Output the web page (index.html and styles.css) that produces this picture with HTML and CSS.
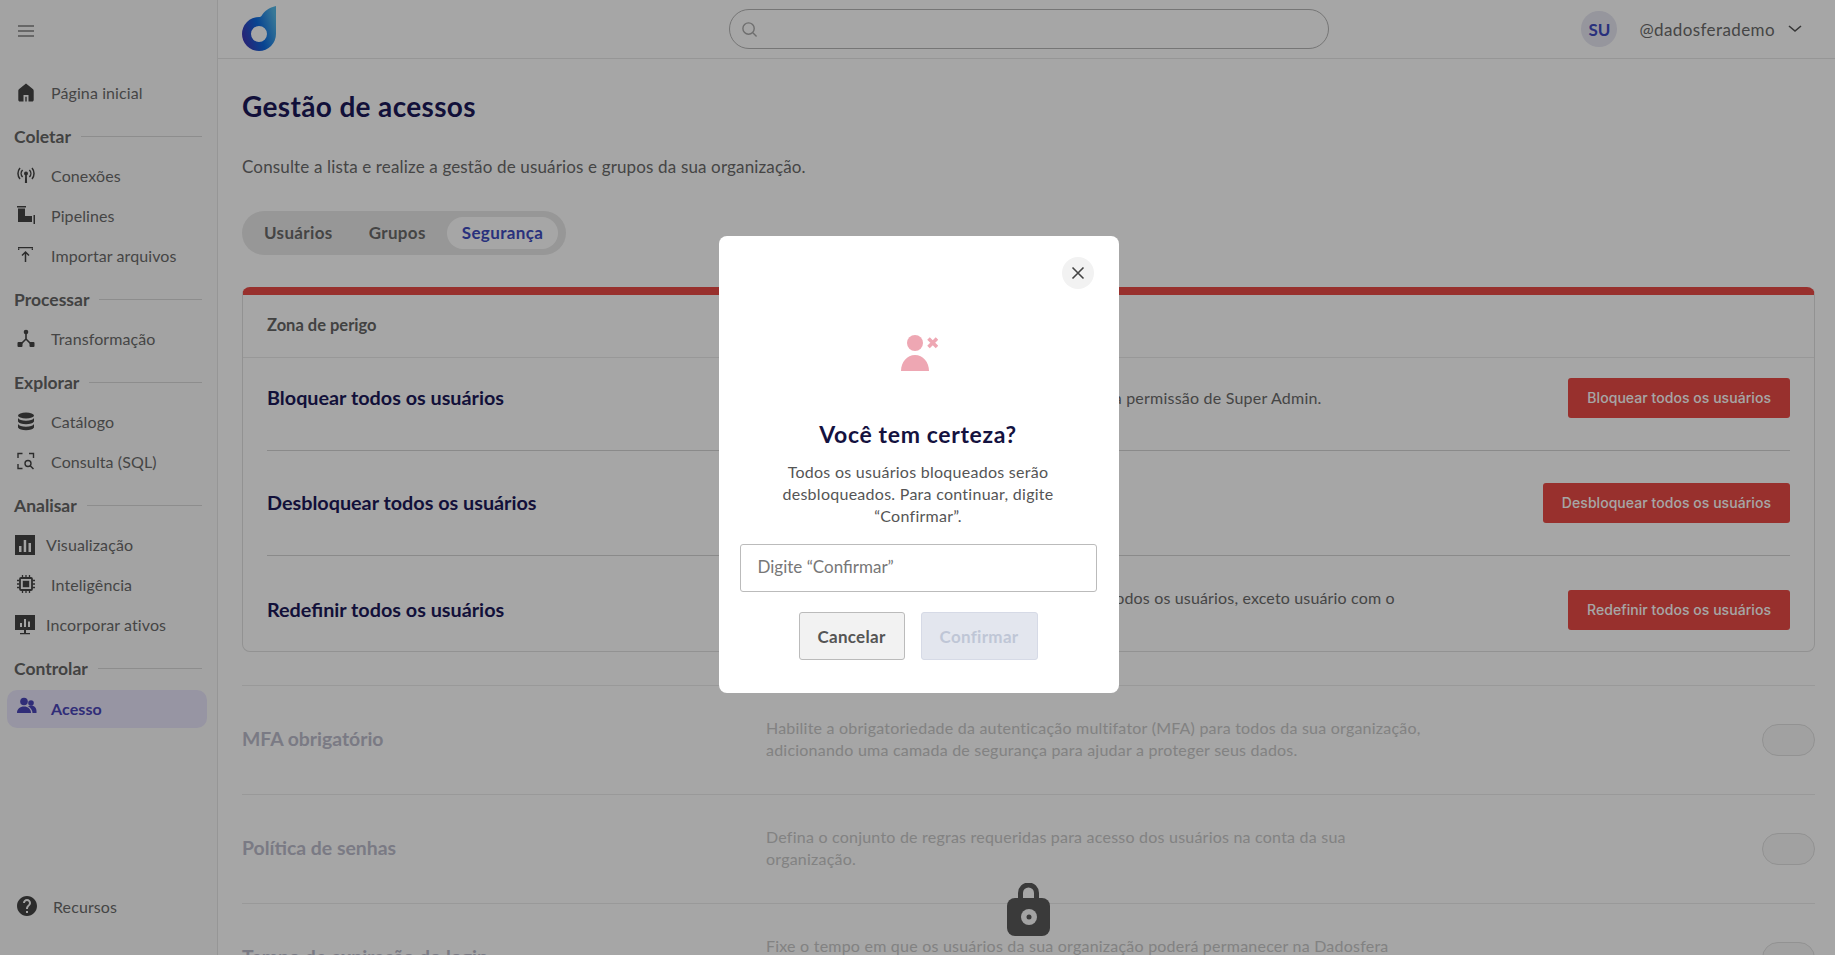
FILE: index.html
```html
<!DOCTYPE html>
<html lang="pt-BR">

<head>
  <meta charset="utf-8">
  <title>Gestão de acessos</title>
  <link rel="stylesheet" href="styles.css">
</head>

<body>
  <div class="app">
    <aside class="sidebar">
      <div class="burger">
        <svg width="16" height="12" viewBox="0 0 16 12"><path d="M0 1h16M0 6h16M0 11h16" stroke="#444" stroke-width="1.200" fill="none"/></svg>
      </div>
      <nav class="nav">
        <a class="item">
          <svg class="icon" viewBox="0 0 20 20"><path fill-rule="evenodd" d="M9 .5 2.500 5.800c-.9.7-1.200 1.300-1.200 2.300V17c0 .9.7 1.500 1.500 1.500h12.400c.8 0 1.500-.6 1.500-1.500V8.100c0-1-.3-1.600-1.200-2.300zM6.500 12h5v6.500h-1.800v-4.800H8.300v4.800H6.500z"/></svg>
          Página inicial
        </a>
        <div class="section"><span>Coletar</span></div>
        <a class="item">
          <svg class="icon" viewBox="0 0 20 20"><circle cx="9" cy="7.500" r="2"/><path d="M8.200 8h1.600l.3 9H7.900z"/><path d="M5.600 11a5 5 0 0 1 0-7M12.400 4a5 5 0 0 1 0 7M3 13a8.500 8.500 0 0 1 0-11M15 2a8.500 8.500 0 0 1 0 11" fill="none" stroke="#444" stroke-width="1.500"/></svg>
          Conexões
        </a>
        <a class="item">
          <svg class="icon" viewBox="0 0 20 20"><path d="M0 0h9v1.500H0zM1 2.500h7V10h7v6H1zM16.500 9H18v9h-1.500z"/></svg>
          Pipelines
        </a>
        <a class="item">
          <svg class="icon" viewBox="0 0 20 20"><path d="M1 1h15v1.300H1zM1 2v2h1.300V2zM14.700 2v2H16V2z"/><path d="M8.500 16V6M5 9.500 8.500 6 12 9.500" fill="none" stroke="#444" stroke-width="1.500"/></svg>
          Importar arquivos
        </a>
        <div class="section"><span>Processar</span></div>
        <a class="item">
          <svg class="icon" viewBox="0 0 20 20"><circle cx="9" cy="3" r="2.300"/><rect x="0.500" y="13" width="5" height="5" rx="1"/><rect x="12.500" y="13" width="5" height="5" rx="1"/><path d="M9 4v6l-5 5M9 10l5 5" fill="none" stroke="#444" stroke-width="1.600"/></svg>
          Transformação
        </a>
        <div class="section"><span>Explorar</span></div>
        <a class="item">
          <svg class="icon" viewBox="0 0 20 20"><ellipse cx="9" cy="3.500" rx="8" ry="3"/><path d="M1 6c1 1.800 4 2.700 8 2.700S16 7.800 17 6v3.500c-1 1.800-4 2.700-8 2.700S2 11.300 1 9.500zM1 12c1 1.800 4 2.700 8 2.700s7-.9 8-2.700v3.500c-1 1.800-4 2.700-8 2.700s-7-.9-8-2.700z"/></svg>
          Catálogo
        </a>
        <a class="item">
          <svg class="icon" viewBox="0 0 20 20"><path d="M1 6V1.500h4.500M12 1.500h4.500V6M1 12v4.500h4.500" fill="none" stroke="#444" stroke-width="1.400"/><circle cx="11" cy="11.500" r="3" fill="none" stroke="#444" stroke-width="1.400"/><path d="m13 13.500 3.500 3.500" stroke="#444" stroke-width="1.500"/></svg>
          Consulta (SQL)
        </a>
        <div class="section"><span>Analisar</span></div>
        <a class="item item-wide">
          <svg class="icon" viewBox="0 0 20 20"><path fill-rule="evenodd" d="M0 0h20v20H0zM4 11v6h2.500v-6zM8.700 5v12h2.500V5zM13.500 8v9H16V8z"/></svg>
          Visualização
        </a>
        <a class="item">
          <svg class="icon" viewBox="0 0 20 20"><rect x="3" y="3" width="12" height="12" rx="1" fill="none" stroke="#444" stroke-width="1.800"/><rect x="5.800" y="5.800" width="6.400" height="6.400"/><path d="M5.500 0v2.500M9 0v2.500M12.500 0v2.500M5.500 15.500V18M9 15.500V18M12.500 15.500V18M0 5.500h2.500M0 9h2.500M0 12.500h2.500M15.500 5.500H18M15.500 9H18M15.500 12.500H18" stroke="#444" stroke-width="1.300"/></svg>
          Inteligência
        </a>
        <a class="item item-wide">
          <svg class="icon" viewBox="0 0 20 20"><path fill-rule="evenodd" d="M0 0h20v15H0zM5 8v4h2V8zM9 4v8h2V4zM13 6.500V12h2V6.500z"/><path d="M9 15h2v3H9zM5 18h10v1.300H5z"/></svg>
          Incorporar ativos
        </a>
        <div class="section"><span>Controlar</span></div>
        <a class="item item-active">
          <svg class="icon" viewBox="0 0 20 20"><circle cx="7" cy="4.500" r="3.800"/><circle cx="14" cy="6" r="2.800"/><path d="M0 16c0-4 3-6.500 7-6.500s7 2.500 7 6.500zM11 9.200c1-.5 2-.7 3-.7 3 0 5.500 2.200 5.500 5.500V16h-4c0-2.700-1.800-5.300-4.500-6.800z"/></svg>
          Acesso
        </a>
      </nav>
      <a class="item item-help">
        <svg class="icon" viewBox="2 2 20 20"><path d="M12 2C6.480 2 2 6.480 2 12s4.480 10 10 10 10-4.480 10-10S17.520 2 12 2zm1 17h-2v-2h2v2zm2.070-7.750-.9.920C13.450 12.900 13 13.500 13 15h-2v-.5c0-1.100.45-2.100 1.170-2.830l1.240-1.260c.37-.36.59-.86.59-1.410 0-1.100-.9-2-2-2s-2 .9-2 2H8c0-2.210 1.790-4 4-4s4 1.790 4 4c0 .88-.36 1.680-.93 2.250z"/></svg>
        Recursos
      </a>
    </aside>

    <div class="content">
      <header class="topbar">
        <svg class="logo" width="34" height="46" viewBox="0 0 34 46">
          <defs>
            <linearGradient id="logoFill" x1="0" y1="0.7" x2="1" y2="0.3">
              <stop offset="0" stop-color="#3f36b4"/>
              <stop offset="0.5" stop-color="#0c6ae0"/>
              <stop offset="1" stop-color="#55b8e8"/>
            </linearGradient>
          </defs>
          <path fill="url(#logoFill)" fill-rule="evenodd" d="M34 0v28a17 17 0 1 1-17-17c1 0 1.800-.2 2.400-1C22.500 5 27 1.500 34 0zM17 20a8 8 0 1 0 0 16 8 8 0 0 0 0-16z"/>
        </svg>
        <div class="search">
          <svg width="17" height="17" viewBox="0 0 18 18"><circle cx="8" cy="8" r="6" fill="none" stroke="#aaa" stroke-width="1.500"/><path d="m12.500 12.500 4 4" stroke="#aaa" stroke-width="1.500"/></svg>
        </div>
        <div class="user">
          <span class="avatar">SU</span>
          <span class="handle">@dadosferademo</span>
          <svg width="14" height="8" viewBox="0 0 14 8"><path d="m1 1 6 5 6-5" fill="none" stroke="#555" stroke-width="1.600"/></svg>
        </div>
      </header>

      <main class="page">
        <h1>Gestão de acessos</h1>
        <p class="lead">Consulte a lista e realize a gestão de usuários e grupos da sua organização.</p>

        <div class="tabs">
          <span class="tab">Usuários</span>
          <span class="tab">Grupos</span>
          <span class="tab tab-active">Segurança</span>
        </div>

        <section class="danger">
          <div class="danger-head">Zona de perigo</div>
          <div class="danger-row row-first">
            <h3>Bloquear todos os usuários</h3>
            <p>Bloqueia todos os usuários, exceto aqueles com a permissão de Super Admin.</p>
            <button class="btn-red" type="button">Bloquear todos os usuários</button>
          </div>
          <div class="danger-row row-second">
            <h3>Desbloquear todos os usuários</h3>
            <p>Desbloqueia todos os usuários.</p>
            <button class="btn-red" type="button">Desbloquear todos os usuários</button>
          </div>
          <div class="danger-row row-third">
            <h3>Redefinir todos os usuários</h3>
            <p>Redefine a senha e encerra as sessões ativas de todos os usuários, exceto usuário com o perfil de Super Admin.</p>
            <button class="btn-red" type="button">Redefinir todos os usuários</button>
          </div>
        </section>

        <section class="settings">
          <div class="setting">
            <h3>MFA obrigatório</h3>
            <p>Habilite a obrigatoriedade da autenticação multifator (MFA) para todos da sua organização,<br>adicionando uma camada de segurança para ajudar a proteger seus dados.</p>
            <span class="toggle"></span>
          </div>
          <div class="setting">
            <h3>Política de senhas</h3>
            <p>Defina o conjunto de regras requeridas para acesso dos usuários na conta da sua<br>organização.</p>
            <span class="toggle"></span>
          </div>
          <div class="setting">
            <h3>Tempo de expiração do login</h3>
            <p>Fixe o tempo em que os usuários da sua organização poderá permanecer na Dadosfera<br>sem precisar entrar novamente.</p>
            <span class="toggle"></span>
          </div>
        </section>
      </main>
    </div>
  </div>

  <div class="overlay"></div>

  <svg class="lock" width="43" height="53" viewBox="0 0 43 53">
    <path d="M13.500 17V10a8 8 0 0 1 16 0v7" fill="none" stroke="#3a3a3a" stroke-width="5"/>
    <rect y="15" width="43" height="38" rx="8" fill="#3a3a3a"/>
    <circle cx="22" cy="34" r="8" fill="#a3a3a3"/>
    <circle cx="22" cy="34" r="2.500" fill="#3a3a3a"/>
  </svg>

  <div class="modal">
    <button class="modal-close" type="button">
      <svg width="14" height="14" viewBox="0 0 14 14"><path d="m1.500 1.500 11 11M12.500 1.500l-11 11" stroke="#444" stroke-width="1.600" fill="none"/></svg>
    </button>
    <svg class="modal-icon" width="38" height="36" viewBox="0 0 38 36">
      <circle cx="15" cy="8" r="8" fill="#eea7b3"/>
      <path d="M1 36c0-9 6-16 14-16s14 7 14 16z" fill="#eea7b3"/>
      <path d="m28.500 3.500 8.500 8.500M37 3.500 28.500 12" stroke="#eea7b3" stroke-width="3.600" fill="none"/>
    </svg>
    <h2>Você tem certeza?</h2>
    <p>Todos os usuários bloqueados serão desbloqueados. Para continuar, digite “Confirmar”.</p>
    <input class="modal-input" type="text" placeholder="Digite “Confirmar”">
    <div class="modal-actions">
      <button class="btn btn-cancel" type="button">Cancelar</button>
      <button class="btn btn-confirm" type="button">Confirmar</button>
    </div>
  </div>
</body>

</html>
```

FILE: styles.css
```css
* {
  box-sizing: border-box;
}

html,
body {
  height: 100%;
  margin: 0;
  overflow: hidden;
}

body {
  background: #fff;
  color: #595959;
  font-family: "Lato", "Open Sans", sans-serif;
  font-size: 16px;
}

h1,
h2,
h3,
p {
  margin: 0;
}

.app {
  display: flex;
  height: 955px;
}

/* sidebar */
.sidebar {
  display: flex;
  flex-direction: column;
  flex: 0 0 218px;
  padding-bottom: 28px;
  background: #fbfbfb;
  border-right: 1px solid #e6e6e6;
}

.burger {
  display: flex;
  align-items: center;
  height: 58px;
  padding: 4px 0 0 18px;
}

.nav {
  display: flex;
  flex-direction: column;
  padding-top: 16px;
}

.item {
  display: flex;
  align-items: center;
  gap: 14px;
  height: 40px;
  padding: 0 0 3px 17px;
  color: #6b6b6b;
  font-size: 16px;
  letter-spacing: 0.1px;
}

.icon {
  flex: none;
  width: 20px;
  height: 20px;
  fill: #444;
}

.item-wide {
  gap: 11px;
  padding-left: 15px;
}

.item-active {
  height: 38px;
  margin: 1px 10px 1px 7px;
  padding: 0 0 1px 10px;
  border-radius: 10px;
  background: #e8e5fb;
  color: #4b45b8;
  font-weight: 700;
}

.item-active .icon {
  fill: #4b45b8;
  margin-top: -4px;
}

.item-help {
  margin-top: auto;
  gap: 16px;
  padding-bottom: 2px;
}

.section {
  display: flex;
  align-items: center;
  gap: 10px;
  height: 40px;
  margin: 3px 15px 0 14px;
  padding-bottom: 2px;
  color: #666;
  font-size: 17.5px;
  font-weight: 700;
}

.section::after {
  content: "";
  flex: 1;
  height: 1px;
  background: #d9d9d9;
}

/* top bar */
.content {
  flex: 1;
  min-width: 0;
}

.topbar {
  display: flex;
  align-items: center;
  height: 59px;
  padding: 0 33px 0 24px;
  border-bottom: 1px solid #e6e6e6;
}

.logo {
  flex: none;
  margin-top: -1px;
}

.search {
  display: flex;
  align-items: center;
  width: 600px;
  height: 40px;
  margin-left: 453px;
  padding-left: 11px;
  border: 1px solid #b5b5b5;
  border-radius: 20px;
}

.user {
  display: flex;
  align-items: center;
  margin-left: auto;
}

.avatar {
  display: flex;
  align-items: center;
  justify-content: center;
  width: 36px;
  height: 36px;
  border-radius: 50%;
  background: #e6e6f2;
  color: #3f4cc0;
  font-size: 17px;
  font-weight: 700;
}

.handle {
  margin: 0 13px 0 22px;
  color: #6b6b6b;
  font-size: 17px;
  letter-spacing: 0.4px;
}

/* page */
.page {
  padding: 31px 20px 0 24px;
}

h1 {
  color: #1c1959;
  font-size: 28px;
  line-height: 32px;
  font-weight: 700;
  letter-spacing: 0.35px;
}

.lead {
  margin-top: 33px;
  line-height: 24px;
  color: #6b6b6b;
  font-size: 17px;
  letter-spacing: 0.15px;
}

.tabs {
  display: inline-flex;
  gap: 6px;
  margin-top: 32px;
  padding: 6px 8px 6px 7px;
  border-radius: 22px;
  background: #e9e9e9;
  vertical-align: top;
}

.tab {
  height: 32px;
  padding: 0 15px;
  border-radius: 16px;
  color: #6b6b6b;
  font-size: 17px;
  font-weight: 700;
  line-height: 32px;
  letter-spacing: 0.35px;
}

.tab-active {
  background: #fff;
  color: #3f4cc0;
}

.danger {
  margin-top: 32px;
  border: 1px solid #e0e0e0;
  border-top: 8px solid #ea4b45;
  border-radius: 8px;
}

.danger-head {
  height: 63px;
  padding-left: 24px;
  border-bottom: 1px solid #eaeaea;
  color: #666;
  font-size: 16.500px;
  font-weight: 700;
  line-height: 61px;
}

.danger-row {
  display: flex;
  align-items: center;
  margin: 0 24px;
}

.danger-row h3 {
  flex: 0 0 499px;
  padding-bottom: 3px;
  color: #1c1959;
  font-size: 19.800px;
  font-weight: 700;
}

.danger-row p {
  width: 650px;
  line-height: 22px;
  color: #6b6b6b;
  letter-spacing: 0.22px;
}

.row-first {
  padding: 20px 0 32px;
  border-bottom: 1px solid #d5d5d5;
}

.row-second {
  padding: 32px 0;
  border-bottom: 1px solid #d5d5d5;
}

.row-third {
  padding: 33px 0 20px;
}

.row-third p {
  margin-top: -2px;
  letter-spacing: 0.16px;
}

.btn-red {
  height: 40px;
  margin-left: auto;
  padding: 0 19px 2px;
  border: none;
  border-radius: 3px;
  background: #ea4b45;
  color: #fff;
  font: 500 14px "Inter", sans-serif;
  letter-spacing: 0.05px;
}

.settings {
  margin-top: 33px;
}

.setting {
  display: flex;
  align-items: center;
  height: 109px;
  border-top: 1px solid #ececec;
}

.setting h3 {
  flex: 0 0 524px;
  padding-bottom: 3px;
  color: #bcbccb;
  font-size: 19.400px;
  font-weight: 700;
}

.setting p {
  padding-bottom: 2px;
  line-height: 22px;
  color: #c8c8c8;
  letter-spacing: 0.22px;
}

.toggle {
  width: 53px;
  height: 32px;
  margin-left: auto;
  border: 1px solid #e0e0e0;
  border-radius: 16px;
  background: #f8f8f8;
}

/* modal layer */
.overlay {
  position: fixed;
  inset: 0;
  background: rgba(0, 0, 0, 0.35);
}

.lock {
  position: fixed;
  left: 1007px;
  top: 883px;
}

.modal {
  position: fixed;
  left: 719px;
  top: 236px;
  display: flex;
  flex-direction: column;
  align-items: center;
  width: 400px;
  height: 457px;
  padding: 99px 22px 0 20px;
  border-radius: 8px;
  background: #fff;
}

.modal-close {
  position: absolute;
  top: 21px;
  right: 25px;
  display: flex;
  align-items: center;
  justify-content: center;
  width: 32px;
  height: 32px;
  padding: 0;
  border: none;
  border-radius: 50%;
  background: #f2f2f2;
}

.modal-icon {
  flex: none;
  margin-left: 2px;
}

.modal h2 {
  margin-top: 49px;
  color: #14123f;
  font-size: 23px;
  line-height: 28px;
  font-weight: 700;
  letter-spacing: 0.65px;
}

.modal p {
  width: 300px;
  margin-top: 13px;
  color: #555;
  font-size: 16px;
  line-height: 22px;
  text-align: center;
  letter-spacing: 0.27px;
}

.modal-input {
  flex: none;
  width: 357px;
  height: 48px;
  margin-top: 17px;
  padding: 0 17px 3px;
  border: 1px solid #bbb;
  border-radius: 3px;
  font: 17px "Lato", sans-serif;
  outline: none;
}

.modal-input::placeholder {
  color: #777;
}

.modal-actions {
  display: flex;
  gap: 16px;
  margin-top: 20px;
}

.btn {
  height: 48px;
  border-radius: 3px;
  font: 700 17px "Lato", sans-serif;
  letter-spacing: 0.3px;
}

.btn-cancel {
  width: 106px;
  border: 1px solid #bbb;
  background: #f2f2f2;
  color: #555;
}

.btn-confirm {
  width: 117px;
  border: 1px solid #d6dae6;
  background: #e3e6ee;
  color: #bfc6d6;
}
```
